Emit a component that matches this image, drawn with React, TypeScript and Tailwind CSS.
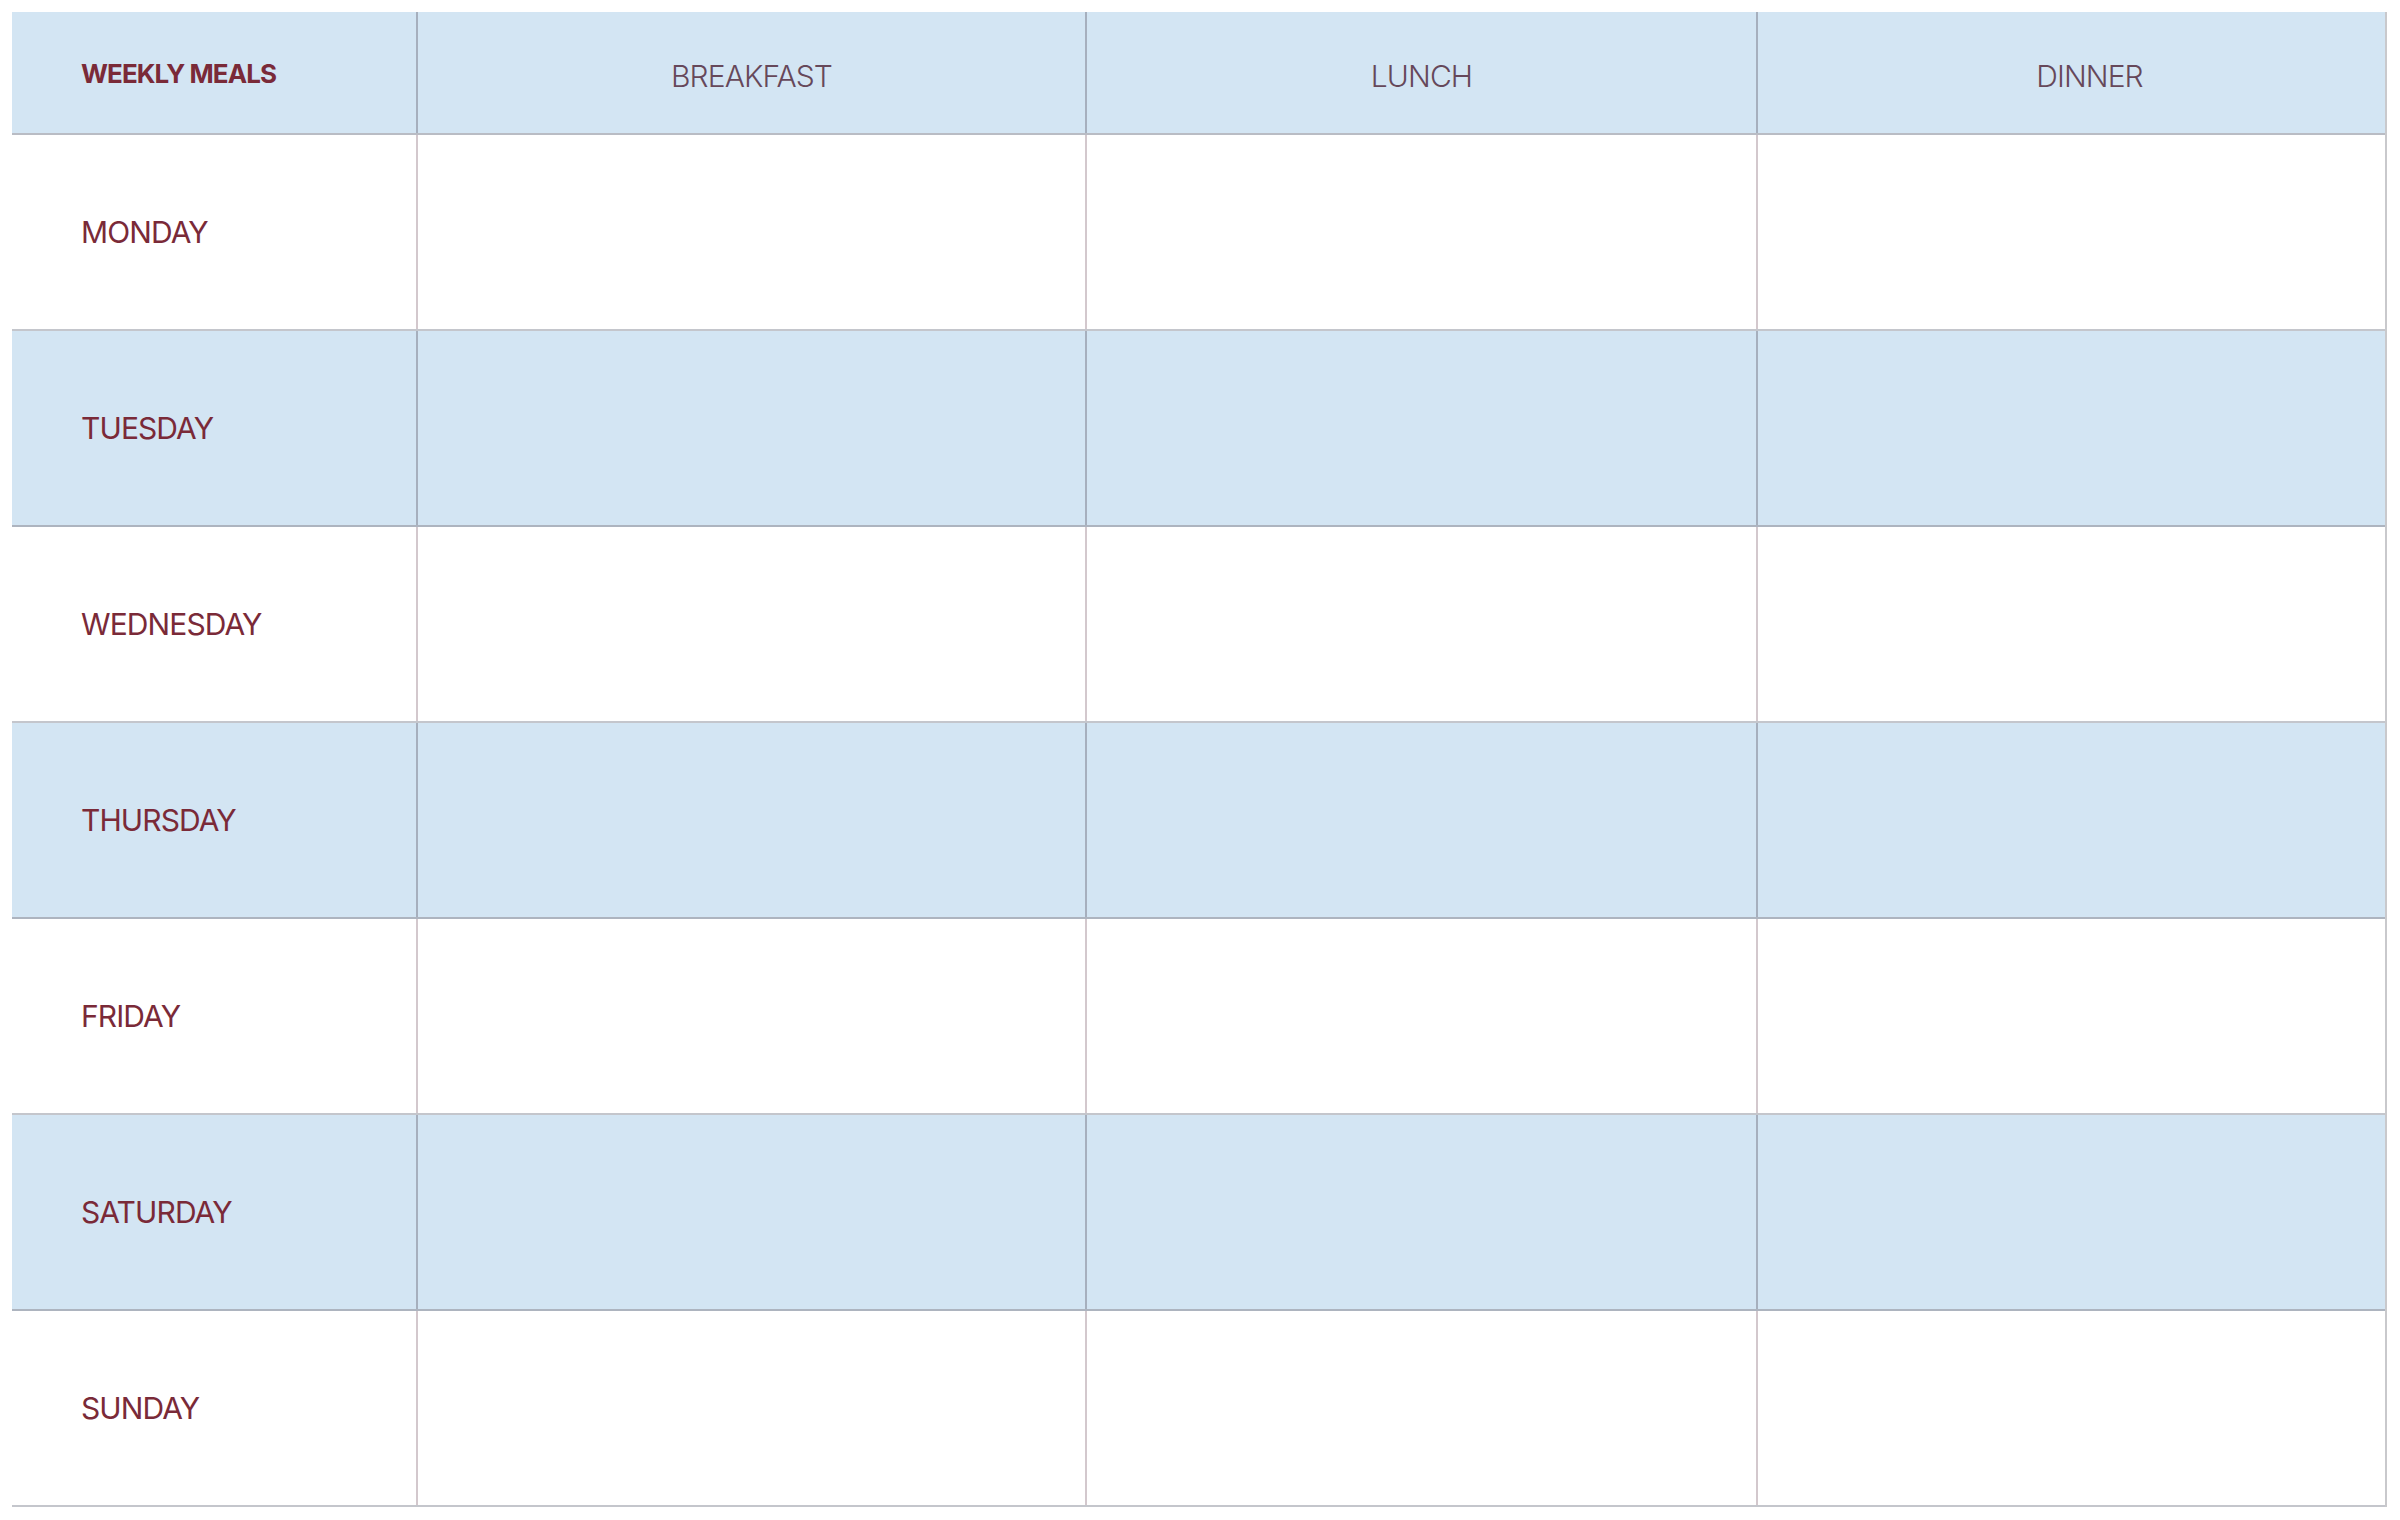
const days = ['MONDAY', 'TUESDAY', 'WEDNESDAY', 'THURSDAY', 'FRIDAY', 'SATURDAY', 'SUNDAY']

export default function App() {
  return (
    <div className="w-[2400px] h-[1520px] bg-white pt-[12px] pl-[12px]" style={{ fontFamily: 'Inter, "Noto Sans", sans-serif' }}>
      <div className="w-[2375px] border-r-2 border-[#c9c9cc]">
        <div className="grid grid-cols-[404px_669px_671px_629px] h-[123px] bg-[#d3e5f3] border-b-2 border-[#b9bcc4]">
          <div className="flex items-center pl-[69px] pt-[2px] text-[26px] font-bold tracking-[-0.035em] text-[#7a2a38]">WEEKLY MEALS</div>
          <div className="flex items-center justify-center pt-[8px] border-l-2 border-[#a6afbd] text-[30px] font-light tracking-[-0.03em] text-[#66485a]">BREAKFAST</div>
          <div className="flex items-center justify-center pt-[8px] border-l-2 border-[#a6afbd] text-[30px] font-light tracking-[-0.03em] text-[#66485a]">LUNCH</div>
          <div className="flex items-center justify-center pt-[8px] pl-[36px] border-l-2 border-[#a6afbd] text-[30px] font-light tracking-[-0.03em] text-[#66485a]">DINNER</div>
        </div>
        {days.map((d, i) => {
          const blue = i % 2 === 1
          return (
            <div
              key={d}
              className={
                'grid grid-cols-[404px_669px_671px_629px] h-[196px] border-b-2 ' +
                (blue ? 'bg-[#d3e5f3] border-[#adb4bf]' : 'bg-white border-[#c4c6cc]')
              }
            >
              <div className="flex items-center pl-[69px] text-[30px] font-normal tracking-[-0.03em] text-[#7a2a38]">{d}</div>
              <div className={'border-l-2 ' + (blue ? 'border-[#a6afbd]' : 'border-[#d3c8cd]')} />
              <div className={'border-l-2 ' + (blue ? 'border-[#a6afbd]' : 'border-[#d3c8cd]')} />
              <div className={'border-l-2 ' + (blue ? 'border-[#a6afbd]' : 'border-[#d3c8cd]')} />
            </div>
          )
        })}
      </div>
    </div>
  )
}
